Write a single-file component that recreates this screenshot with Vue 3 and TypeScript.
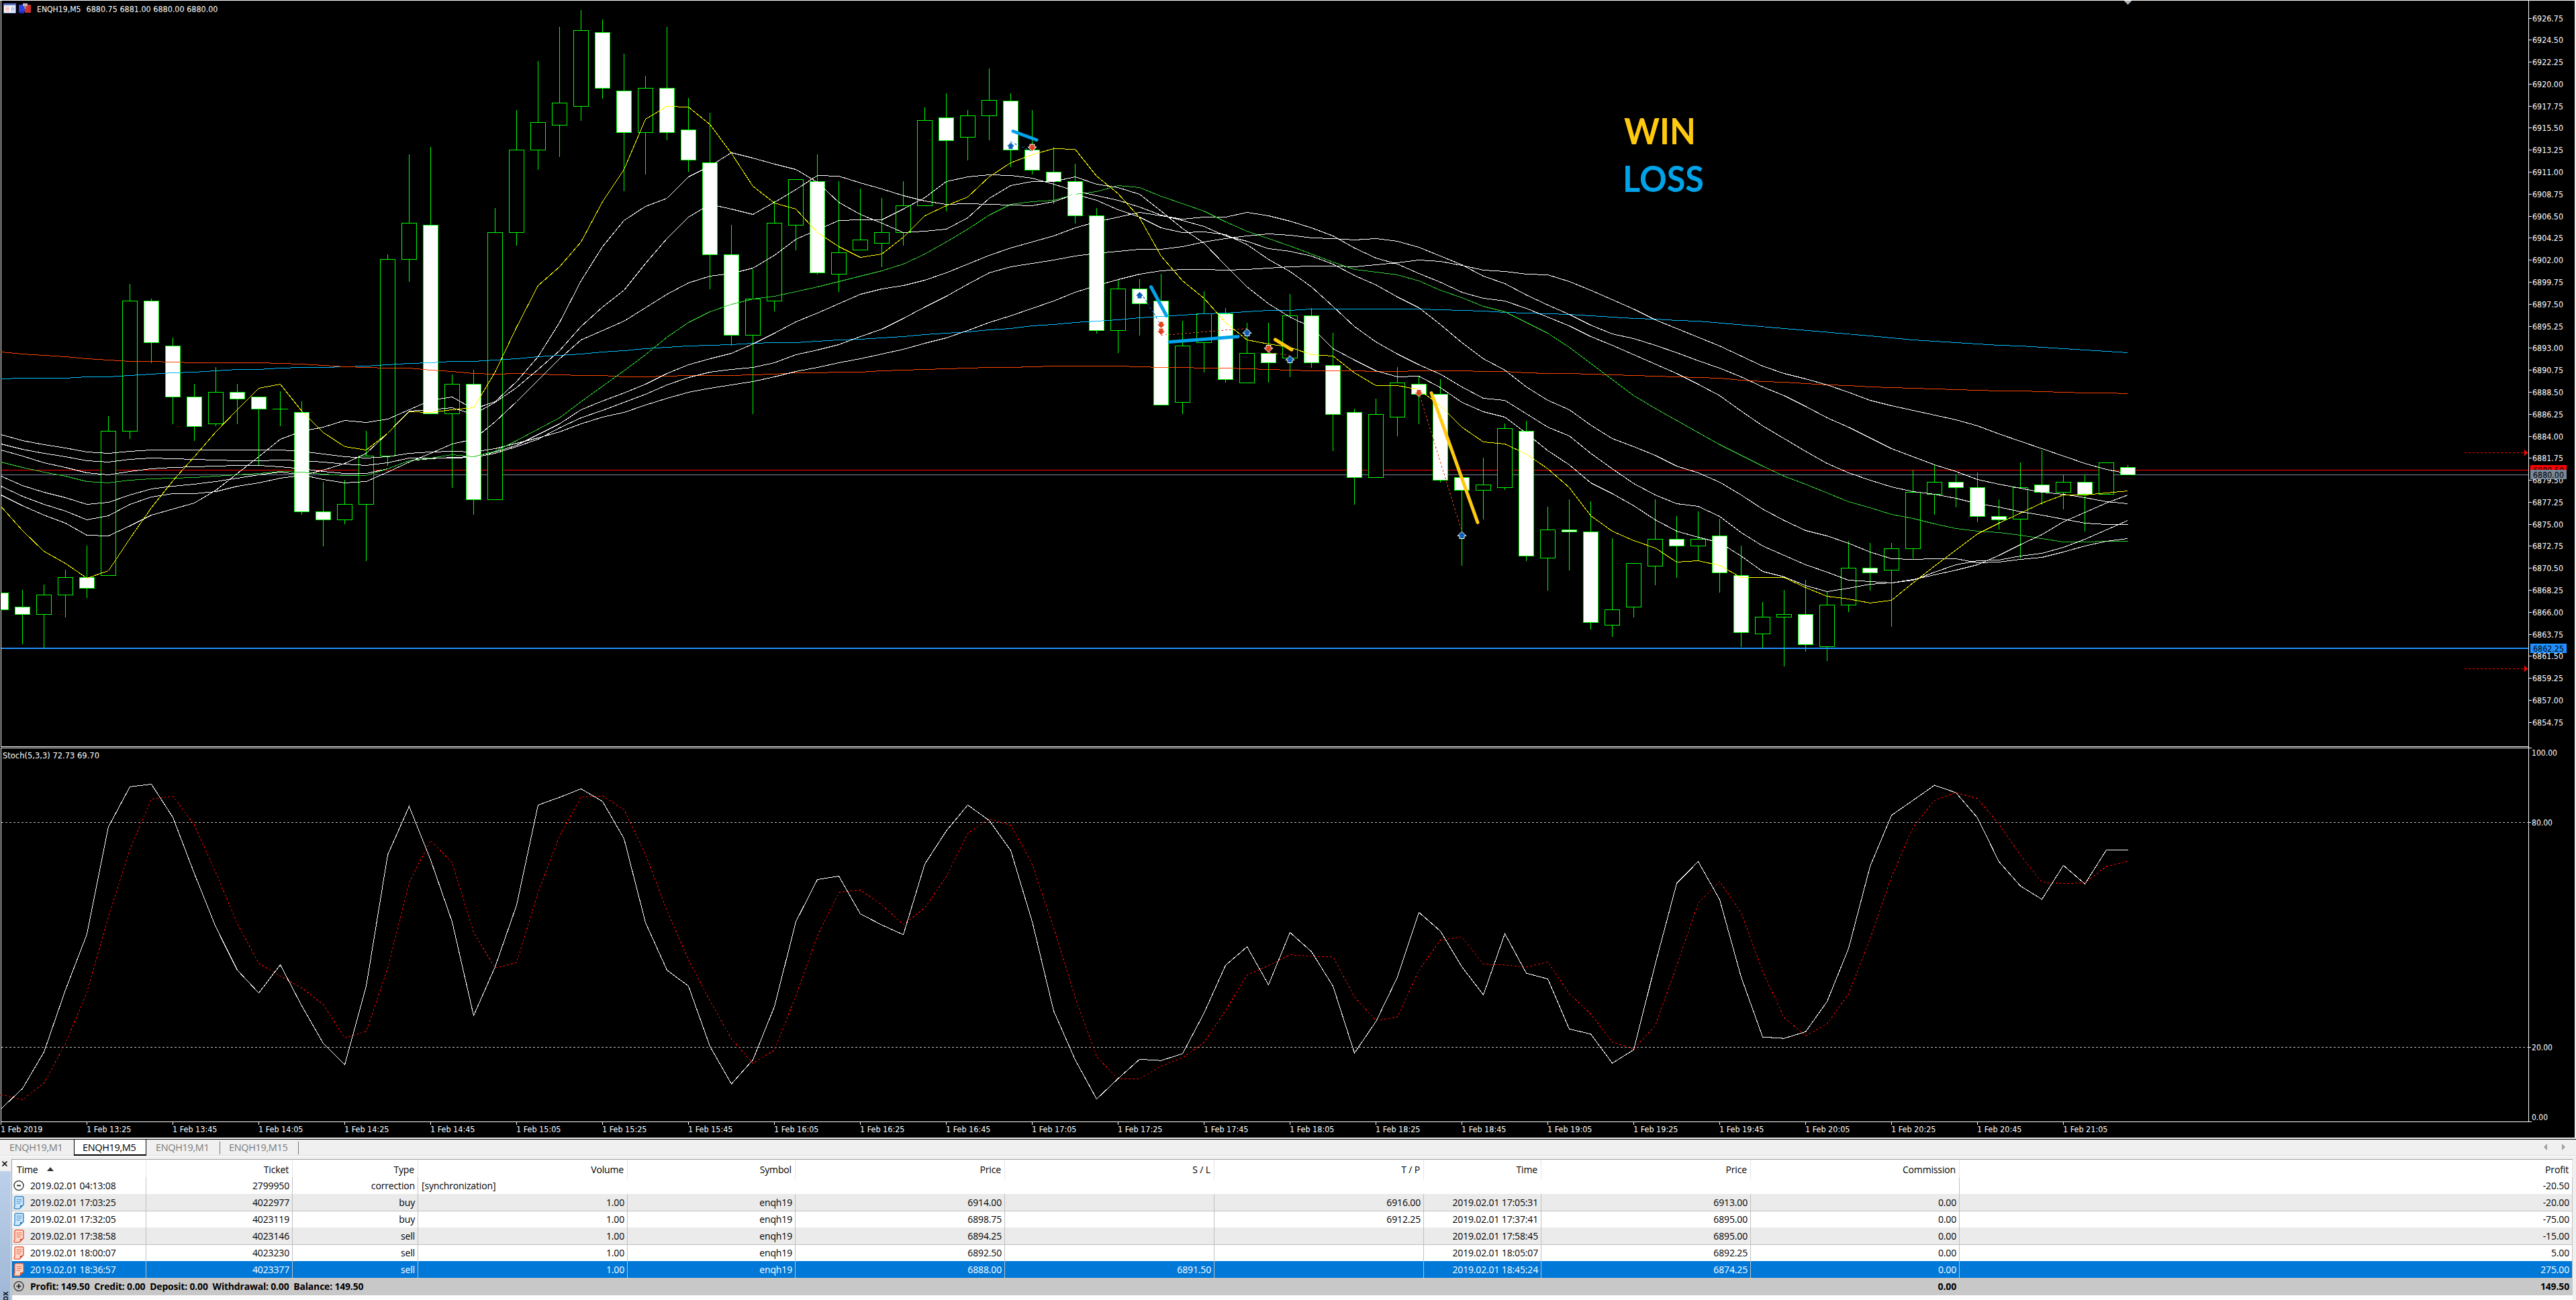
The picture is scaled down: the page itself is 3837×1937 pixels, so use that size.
<script setup lang="ts">
type Candle = [number, number, number, number, number]
type Sample = number | null

const STEP = 32
const barX = (i: number): number => 1 + STEP * i

// Samples are stored per strip of bars, each with its own top and resolution.
function priceY(i: number, v: number): number {
  if (i < 60) return v / 1.568
  if (i < 80) return 100 + v / 1.7422
  return 500 + v / 3
}
function stochY(i: number, v: number): number {
  return 1100 + v / (i < 80 ? 2.6133 : 2.529)
}

// [falling, high, body top, body bottom, low]
const candles: Candle[] = [
  [1, 1384, 1384, 1424, 1424], [1, 1378, 1418, 1435, 1505], [0, 1366, 1390, 1435, 1513], [0, 1331, 1349, 1390, 1443],
  [1, 1275, 1349, 1373, 1397], [0, 972, 1007, 1344, 1344], [0, 663, 703, 1007, 1025], [1, 698, 703, 800, 848],
  [1, 789, 807, 927, 991], [1, 897, 927, 995, 1030], [0, 858, 915, 990, 996], [1, 897, 915, 932, 991],
  [1, 927, 927, 955, 1088], [0, 914, 955, 955, 996], [1, 938, 962, 1195, 1203], [1, 1126, 1195, 1213, 1276],
  [0, 1121, 1178, 1213, 1225], [0, 1007, 1064, 1178, 1311], [0, 594, 606, 1064, 1088], [0, 361, 521, 606, 659],
  [1, 343, 526, 966, 966], [0, 875, 897, 966, 1140], [1, 864, 897, 1167, 1203], [0, 486, 543, 1167, 1167],
  [0, 257, 349, 543, 574], [0, 143, 286, 349, 397], [0, 63, 240, 292, 367], [0, 24, 70, 247, 282],
  [1, 45, 75, 206, 230], [1, 125, 212, 309, 447], [0, 177, 206, 309, 408], [1, 63, 206, 309, 328],
  [1, 229, 303, 373, 402], [1, 263, 379, 595, 676], [1, 525, 595, 783, 808], [0, 628, 698, 783, 967],
  [0, 469, 521, 703, 728], [0, 418, 418, 526, 585], [1, 361, 424, 636, 641], [0, 423, 590, 640, 682],
  [0, 441, 560, 584, 584], [0, 463, 543, 567, 624], [0, 423, 480, 543, 574], [0, 251, 281, 480, 480],
  [1, 218, 275, 327, 494], [0, 257, 269, 320, 374], [0, 160, 234, 269, 328], [1, 218, 235, 349, 390],
  [1, 257, 349, 396, 408], [1, 344, 401, 424, 477], [1, 383, 424, 504, 522], [1, 486, 504, 772, 779],
  [0, 652, 675, 772, 825], [1, 652, 675, 709, 784], [1, 640, 703, 945, 945], [0, 750, 807, 939, 967],
  [0, 681, 733, 800, 870], [1, 720, 733, 886, 894], [0, 754, 824, 893, 893], [1, 754, 824, 847, 894],
  [0, 589, 645, 754, 805], [1, 625, 645, 767, 781], [1, 690, 773, 900, 997], [1, 887, 895, 1065, 1136],
  [0, 861, 900, 1065, 1065], [0, 779, 818, 907, 958], [1, 803, 823, 849, 927], [1, 810, 849, 1072, 1078],
  [1, 1065, 1065, 1097, 1294], [0, 1014, 1084, 1097, 1174], [0, 925, 938, 1091, 1098], [1, 918, 945, 1269, 1282],
  [0, 1141, 1200, 1274, 1359], [1, 1122, 1200, 1205, 1307], [1, 1127, 1205, 1440, 1460], [0, 1223, 1408, 1447, 1479],
  [0, 1288, 1288, 1401, 1429], [0, 1122, 1224, 1294, 1345], [1, 1166, 1224, 1243, 1326], [0, 1153, 1224, 1243, 1282],
  [1, 820, 895, 1060, 1149], [1, 939, 1072, 1325, 1392], [0, 1191, 1258, 1333, 1396], [0, 1137, 1246, 1258, 1479],
  [1, 1092, 1246, 1379, 1413], [0, 1145, 1204, 1390, 1455], [0, 918, 1039, 1204, 1236], [1, 927, 1039, 1060, 1140],
  [0, 927, 952, 1048, 1302], [0, 600, 700, 952, 996], [0, 579, 655, 709, 801], [1, 622, 655, 679, 768],
  [1, 612, 679, 808, 834], [1, 732, 808, 821, 867], [0, 567, 679, 820, 996], [1, 513, 667, 700, 756],
  [0, 622, 655, 700, 777], [1, 622, 655, 709, 876], [0, 568, 568, 709, 709], [1, 579, 589, 622, 622],
]

const bars = candles.map(([falling, high, top, bottom, low], i) => {
  const y = (v: number): number => Math.round(priceY(i, v))
  return { x: barX(i), falling: falling === 1, high: y(high), top: y(top), bottom: y(bottom), low: y(low) }
})

const n = null
const averages: { cls: string; data: Sample[] }[] = [
  { cls: 'ma-sky', data: [
    884, 883, 882, 882, 880, 879, 876, 873, 870, 868, 865, 863, 862, 860, 858, 857, 856, 854, 851, 848,
    846, 844, 843, 840, 837, 833, 829, 826, 822, 819, 814, 811, 808, 806, 804, 802, 800, 799, 797, 794,
    792, 789, 786, 781, 777, 774, 770, 766, 761, 758, 753, 750, 747, 742, 739, 736, 733, 730, 727, 725,
    630, 627, 627, 627, 627, 628, 628, 629, 631, 633, 636, 638, 640, 642, 645, 648, 651, 654, 656, 659,
    n, n, n, n, n, n, n, -1, 8, 17, 23, 29, 35, 42, 46, 52, 58, 64, 70, 76] },
  { cls: 'ma-orange', data: [
    822, 826, 829, 833, 838, 841, 843, 844, 845, 846, 846, 846, 847, 848, 850, 853, 856, 857, 859, 860,
    864, 867, 872, 873, 872, 873, 875, 876, 877, 879, 880, 878, 876, 876, 876, 875, 874, 871, 871, 869,
    868, 866, 864, 862, 861, 859, 858, 857, 856, 855, 854, 855, 855, 856, 857, 858, 859, 860, 861, 863,
    786, 787, 787, 788, 790, 789, 788, 788, 788, 789, 790, 792, 794, 794, 796, 798, 800, 802, 804, 805,
    190, 197, 203, 208, 213, 219, 223, 229, 232, 235, 236, 239, 242, 245, 247, 248, 251, 254, 254, 257] },
  { cls: 'ma-white', data: [
    1015, 1028, 1038, 1046, 1056, 1059, 1054, 1051, 1051, 1051, 1050, 1050, 1050, 1050, 1054, 1060, 1066, 1070, 1066, 1058,
    1056, 1054, 1056, 1047, 1035, 1022, 1008, 990, 974, 962, 945, 930, 916, 907, 898, 891, 880, 867, 857, 847,
    837, 826, 815, 802, 789, 772, 753, 737, 720, 702, 682, 666, 652, 640, 632, 628, 629, 631, 628, 625,
    517, 515, 516, 518, 513, 507, 500, 503, 514, 526, 529, 537, 539, 555, 578, 602, 627, 655, 678, 700,
    45, 90, 134, 167, 193, 220, 252, 287, 311, 332, 353, 376, 403, 439, 472, 505, 538, 569, 597, 616] },
  { cls: 'ma-white', data: [
    1037, 1049, 1058, 1067, 1076, 1078, 1073, 1070, 1071, 1073, 1074, 1076, 1075, 1074, 1076, 1079, 1084, 1087, 1080, 1070,
    1070, 1069, 1068, 1058, 1043, 1025, 999, 975, 958, 939, 920, 898, 881, 869, 863, 857, 846, 828, 817, 805,
    786, 768, 743, 716, 692, 664, 637, 623, 615, 607, 597, 591, 586, 581, 581, 575, 565, 557, 550, 545,
    435, 443, 444, 448, 444, 452, 467, 490, 513, 541, 561, 591, 617, 641, 669, 691, 704, 721, 740, 762,
    145, 184, 227, 268, 316, 365, 409, 457, 505, 541, 575, 607, 641, 662, 682, 700, 709, 722, 741, 751] },
  { cls: 'ma-white', data: [
    1050, 1065, 1080, 1092, 1104, 1109, 1101, 1094, 1091, 1089, 1088, 1087, 1087, 1089, 1095, 1101, 1105, 1106, 1094, 1075,
    1071, 1068, 1067, 1056, 1040, 1015, 990, 957, 936, 918, 897, 872, 851, 838, 824, 803, 777, 751, 730, 708,
    686, 674, 667, 654, 637, 616, 596, 579, 565, 551, 531, 517, 506, 495, 504, 511, 506, 506, 496, 503,
    399, 416, 438, 469, 494, 511, 534, 558, 583, 599, 606, 625, 648, 671, 699, 721, 746, 770, 795, 823,
    268, 335, 403, 460, 515, 569, 613, 645, 675, 697, 708, 725, 750, 766, 785, 800, 819, 838, 844, 844] },
  { cls: 'ma-green', data: [
    1078, 1092, 1103, 1112, 1124, 1128, 1121, 1118, 1116, 1115, 1112, 1108, 1105, 1101, 1103, 1107, 1110, 1110, 1094, 1075,
    1069, 1062, 1066, 1053, 1028, 1002, 975, 938, 902, 865, 828, 787, 753, 728, 710, 698, 691, 680, 670, 657,
    645, 632, 616, 592, 565, 534, 501, 477, 471, 468, 453, 447, 432, 437, 458, 475, 492, 518, 539, 557,
    464, 484, 506, 524, 532, 539, 554, 579, 598, 620, 635, 662, 690, 727, 769, 810, 852, 885, 917, 948,
    485, 533, 581, 628, 662, 701, 740, 767, 797, 815, 841, 860, 874, 880, 892, 907, 922, 922, 919, 919] },
  { cls: 'ma-white', data: [
    1112, 1133, 1149, 1162, 1178, 1173, 1155, 1142, 1135, 1131, 1124, 1116, 1109, 1102, 1108, 1120, 1128, 1125, 1102, 1078,
    1058, 1037, 1026, 984, 938, 888, 838, 794, 771, 750, 718, 686, 660, 645, 638, 626, 596, 558, 536, 514,
    512, 513, 488, 461, 424, 412, 407, 410, 416, 430, 446, 456, 467, 483, 502, 515, 528, 550, 563, 580,
    477, 490, 511, 540, 565, 596, 624, 667, 714, 756, 785, 829, 864, 889, 928, 964, 984, 1007, 1034, 1052,
    655, 710, 773, 824, 871, 895, 928, 965, 997, 1000, 997, 997, 1015, 1010, 1000, 991, 965, 940, 919, 907] },
  { cls: 'ma-white', data: [
    1135, 1158, 1177, 1194, 1213, 1205, 1178, 1160, 1152, 1153, 1148, 1136, 1127, 1116, 1110, 1098, 1082, 1059, 1012, 960,
    957, 951, 968, 940, 905, 862, 818, 762, 716, 677, 615, 557, 507, 477, 488, 500, 472, 442, 409, 411,
    426, 441, 457, 469, 477, 475, 476, 478, 480, 470, 453, 467, 489, 507, 532, 542, 541, 548, 571, 606,
    529, 570, 621, 673, 712, 744, 771, 797, 830, 859, 864, 899, 933, 957, 1001, 1041, 1081, 1109, 1132, 1140,
    808, 880, 940, 980, 1022, 1055, 1093, 1099, 1105, 1092, 1055, 1022, 1006, 1003, 985, 973, 946, 910, 866, 826] },
  { cls: 'ma-white', data: [
    1155, 1180, 1202, 1222, 1250, 1252, 1228, 1202, 1188, 1175, 1145, 1105, 1067, 1026, 1007, 998, 982, 987, 978, 956,
    935, 927, 955, 938, 890, 833, 752, 655, 575, 514, 482, 463, 413, 388, 356, 369, 383, 395, 425, 472,
    500, 520, 543, 540, 535, 508, 462, 433, 424, 424, 413, 430, 438, 453, 492, 533, 568, 620, 670, 709,
    648, 674, 730, 760, 787, 804, 802, 831, 869, 893, 908, 949, 995, 1032, 1078, 1107, 1138, 1174, 1204, 1219,
    925, 983, 1054, 1076, 1117, 1144, 1127, 1111, 1105, 1090, 1067, 1046, 1024, 980, 934, 888, 830, 788, 748, 712] },
  { cls: 'ma-yellow', data: [
    1182, 1238, 1287, 1316, 1350, 1333, 1258, 1185, 1122, 1066, 1008, 957, 906, 897, 960, 1010, 1042, 1051, 1012, 961,
    962, 956, 952, 868, 764, 667, 622, 565, 470, 395, 277, 247, 250, 290, 358, 435, 474, 488, 542, 575,
    600, 593, 554, 503, 480, 460, 412, 380, 360, 346, 348, 411, 452, 508, 598, 655, 696, 753, 794, 803,
    726, 745, 750, 793, 825, 825, 837, 878, 933, 972, 978, 1003, 1042, 1090, 1164, 1204, 1228, 1247, 1284, 1280,
    1027, 1081, 1081, 1081, 1126, 1165, 1177, 1195, 1183, 1105, 1030, 957, 886, 838, 792, 747, 712, 712, 703, 694] },
]

const lines = averages.map(({ cls, data }) => ({
  cls,
  points: data
    .map((v, i) => (v === null ? '' : `${barX(i) + 0.5},${(Math.round(priceY(i, v)) + 0.5).toFixed(1)}`))
    .filter(Boolean)
    .join(' '),
}))

const stochRaw: number[] = [
  1443, 1364, 1222, 980, 763, 345, 189, 179, 308, 527, 735, 903, 992, 882, 1042, 1188, 1271, 965, 454, 265,
  474, 715, 1080, 890, 650, 260, 230, 197, 246, 391, 718, 903, 965, 1200, 1346, 1252, 1045, 714, 550, 537,
  684, 727, 765, 490, 361, 260, 320, 437, 714, 1062, 1252, 1405, 1325, 1250, 1255, 1228, 1070, 884, 812, 960,
  756, 831, 965, 1226, 1103, 930, 678, 751, 890, 999, 761, 915, 937, 1132, 1152, 1265, 1213, 880, 565, 480,
  608, 900, 1126, 1131, 1106, 992, 792, 483, 290, 234, 177, 205, 300, 465, 557, 607, 479, 549, 421, 421,
]
const main = stochRaw.map((v, i) => stochY(i, v))
// The signal line is the three-bar average of the main line.
const signal = main.map((_, i) =>
  i === 0 ? 1631 : i === 1 ? 1638.5 : (main[i] + main[i - 1] + main[i - 2]) / 3,
)
const toPoints = (ys: number[]): string => ys.map((y, i) => `${barX(i) + 0.5},${y.toFixed(1)}`).join(' ')

const priceTicks = Array.from({ length: 33 }, (_, k) => {
  const price = 6926.75 - 2.25 * k
  return { label: price.toFixed(2), y: Math.round(26.5 + k * 32.79) }
})
const stochTicks = [
  { label: '100.00', y: 1121, w: 38 },
  { label: '80.00', y: 1225, w: 31 },
  { label: '20.00', y: 1560, w: 31 },
  { label: '0.00', y: 1664, w: 24 },
]

const timeTicks = Array.from({ length: 25 }, (_, k) => {
  const t = 13 * 60 + 5 + 20 * k
  const hh = Math.floor(t / 60)
  const mm = String(t % 60).padStart(2, '0')
  return { x: 1 + 128 * k, label: k === 0 ? '1 Feb 2019' : `1 Feb ${hh}:${mm}`, w: k === 0 ? 62.5 : 66.5 }
})

const upArrows = [[1505.5, 217.5], [1697.5, 440], [1857.5, 495.5], [1921.5, 535.5], [2177.5, 797.5]]
const downArrows = [[1537.5, 220], [1729.5, 484], [1729.5, 494], [1889.5, 519.5], [2113.5, 585.5]]

interface Deal { time: string; ticket: string; type: string; price: string; sl: string; tp: string; time2: string; price2: string; profit: string }
const deals: Deal[] = [
  { time: '2019.02.01 17:03:25', ticket: '4022977', type: 'buy', price: '6914.00', sl: '', tp: '6916.00', time2: '2019.02.01 17:05:31', price2: '6913.00', profit: '-20.00' },
  { time: '2019.02.01 17:32:05', ticket: '4023119', type: 'buy', price: '6898.75', sl: '', tp: '6912.25', time2: '2019.02.01 17:37:41', price2: '6895.00', profit: '-75.00' },
  { time: '2019.02.01 17:38:58', ticket: '4023146', type: 'sell', price: '6894.25', sl: '', tp: '', time2: '2019.02.01 17:58:45', price2: '6895.00', profit: '-15.00' },
  { time: '2019.02.01 18:00:07', ticket: '4023230', type: 'sell', price: '6892.50', sl: '', tp: '', time2: '2019.02.01 18:05:07', price2: '6892.25', profit: '5.00' },
  { time: '2019.02.01 18:36:57', ticket: '4023377', type: 'sell', price: '6888.00', sl: '6891.50', tp: '', time2: '2019.02.01 18:45:24', price2: '6874.25', profit: '275.00' },
]
const headers = ['Ticket', 'Type', 'Volume', 'Symbol', 'Price', 'S / L', 'T / P', 'Time', 'Price', 'Commission', 'Profit']
const tabs = [
  { label: 'ENQH19,M1', cls: 'tab-first' },
  { label: 'ENQH19,M5', cls: 'tab-active' },
  { label: 'ENQH19,M1', cls: 'tab-third' },
  { label: 'ENQH19,M15', cls: 'tab-fourth' },
]
</script>

<template>
  <div class="terminal">
    <svg class="chart" width="3837" height="1698" viewBox="0 0 3837 1698">
      <rect width="3837" height="1698" fill="#000" />
      <g shape-rendering="crispEdges">
        <!-- window frames -->
        <rect x="0" y="0" width="3837" height="1" fill="#fff" />
        <rect x="1" y="0" width="1" height="1113" fill="#fff" />
        <rect x="1" y="1114" width="1" height="558" fill="#fff" />
        <rect x="1" y="1112" width="3766" height="1" fill="#fff" />
        <rect x="1" y="1114" width="3766" height="1" fill="#fff" />
        <rect x="1" y="1671" width="3766" height="1" fill="#fff" />
        <rect x="3766" y="0" width="1" height="1672" fill="#fff" />
        <path d="M3163 1h12l-6 6z" fill="#a9b1bb" />

        <!-- price levels -->
        <rect x="2" y="700" width="3764" height="1" fill="#f00" />
        <rect x="2" y="707" width="3764" height="1" fill="#778899" />

        <g v-for="b in bars" :key="b.x" fill="#0f0">
          <rect :x="b.x" :y="b.high" width="1" :height="Math.max(b.low - b.high, 1)" />
          <rect :x="b.x - 11" :y="b.top" width="23" :height="b.bottom - b.top + 1" />
          <rect
            v-if="b.bottom > b.top + 1"
            :x="b.x - 10"
            :y="b.top + 1"
            width="21"
            :height="b.bottom - b.top - 1"
            :fill="b.falling ? '#fff' : '#000'"
          />
        </g>
        <rect x="0" y="870" width="1" height="50" fill="#000" />
        <polyline v-for="(l, k) in lines" :key="k" :class="['ma', l.cls]" :points="l.points" />
        <rect x="2" y="965" width="3764" height="2" fill="#1e90ff" />

        <!-- pending stop markers -->
        <g stroke="#f00">
          <path d="M3671 674.5h88M3671 996.5h88" stroke-dasharray="3 3" />
        </g>
        <path d="M3760 669.5l5 5-5 5zM3760 991.5l5 5-5 5z" fill="#f00" />

        <!-- trade links -->
        <g fill="none" stroke-dasharray="3 3">
          <path d="M1505.5 211.5L1537.5 225.5M1700 437L1729.5 484.5" stroke="#0b5fb5" />
          <path d="M1729.5 499.5L1857.5 489.5M1889.5 525.5L1921.5 529.5M2113.5 585L2177.5 792" stroke="#e2431e" />
        </g>
      </g>

      <path v-for="(a, k) in upArrows" :key="'u' + k" class="arrow-up" :transform="`translate(${a[0]} ${a[1]})`" d="M0 -5.5L6.5 1H3.5V5H-3.5V1H-6.5z" />
      <path v-for="(a, k) in downArrows" :key="'d' + k" class="arrow-down" :transform="`translate(${a[0]} ${a[1]})`" d="M0 5.5L6.5 -1H3.5V-5H-3.5V-1H-6.5z" />

      <g fill="none" stroke-width="5" stroke-linecap="round">
        <path d="M1509 195.5L1544 208.5M1714.5 427.5L1737.5 470.5M1742 509.5L1844 501.5" stroke="#00a2e8" />
        <path d="M1899.5 506L1924 521M2132 585.5L2201 778.5" stroke="#ffc90e" />
      </g>

      <!-- oscillator -->
      <g shape-rendering="crispEdges" fill="none">
        <path d="M2 1225.5H3766M2 1560.5H3766" stroke="#c0c0c0" stroke-dasharray="3 3" />
        <polyline :points="toPoints(signal)" stroke="#f00" stroke-dasharray="3 3" />
        <polyline :points="toPoints(main)" stroke="#fff" />
        <path d="M3767 1114.5h4M3767 1225.5h3M3767 1560.5h3M3767 1671.5h4" stroke="#fff" />
        <path v-for="t in timeTicks" :key="t.x" :d="`M${t.x + 0.5} 1672v4`" stroke="#fff" />
        <path v-for="t in priceTicks" :key="t.y" :d="`M3767 ${t.y + 0.5}h4`" stroke="#fff" />
      </g>

      <g class="axis-text">
        <text v-for="t in priceTicks" :key="t.y" x="3772" :y="t.y + 5" textLength="46" lengthAdjust="spacingAndGlyphs">{{ t.label }}</text>
        <text v-for="t in stochTicks" :key="t.y" x="3771" :y="t.y + 5" :textLength="t.w" lengthAdjust="spacingAndGlyphs">{{ t.label }}</text>
        <text v-for="t in timeTicks" :key="t.x" :x="t.x" y="1687" :textLength="t.w" lengthAdjust="spacingAndGlyphs">{{ t.label }}</text>
        <text x="55" y="18" textLength="65.5" lengthAdjust="spacingAndGlyphs">ENQH19,M5</text>
        <text x="128.5" y="18" textLength="196" lengthAdjust="spacingAndGlyphs">6880.75 6881.00 6880.00 6880.00</text>
        <text x="4" y="1130" textLength="144" lengthAdjust="spacingAndGlyphs">Stoch(5,3,3) 72.73 69.70</text>
      </g>
      <g class="axis-text badge">
        <rect x="3769" y="693" width="54" height="14" fill="#f00" />
        <text x="3773" y="705" textLength="46" lengthAdjust="spacingAndGlyphs">6880.50</text>
        <rect x="3769" y="700" width="54" height="14" fill="#778899" />
        <text x="3773" y="712" textLength="46" lengthAdjust="spacingAndGlyphs">6880.00</text>
        <rect x="3769" y="959" width="54" height="14" fill="#1e90ff" />
        <text x="3773" y="971" textLength="46" lengthAdjust="spacingAndGlyphs">6862.25</text>
      </g>

      <!-- window buttons -->
      <g shape-rendering="crispEdges">
        <rect x="5" y="5" width="19" height="15" rx="1" fill="#5b6fc0" />
        <rect x="6" y="8" width="17" height="11" fill="#fff" />
        <path d="M8 10.5h6M8 12.5h6M8 14.5h6M8 16.5h6" stroke="#f0a090" />
        <path d="M16 10.5h6M16 12.5h6M16 14.5h6M16 16.5h6" stroke="#8fa4e8" />
        <rect x="28" y="7" width="9" height="10" fill="#2f3fe0" />
        <rect x="37" y="7" width="9" height="12" fill="#d03028" />
        <path d="M27 17h9v3h-7z" fill="#1c2ab8" />
        <rect x="34" y="5" width="7" height="4" fill="#b9b9b9" />
        <rect x="36" y="9" width="3" height="4" fill="#888" />
      </g>

      <g class="verdict">
        <text x="2419" y="215" textLength="107" lengthAdjust="spacingAndGlyphs" fill="#ffc90e">WIN</text>
        <text x="2417" y="286" textLength="121" lengthAdjust="spacingAndGlyphs" fill="#00a2e8">LOSS</text>
      </g>

      <rect x="3835" y="0" width="2" height="1698" fill="#f0f0f0" />
      <rect x="0" y="1695" width="3837" height="2" fill="#f4f4f4" />
      <rect x="0" y="1697" width="3837" height="1" fill="#000" />
    </svg>

    <div class="tabbar">
      <div v-for="(t, k) in tabs" :key="k" :class="['tab', t.cls]">{{ t.label }}</div>
      <svg class="scrollers" width="40" height="12" viewBox="0 0 40 12">
        <path d="M7 1v10L2 6zM29 1v10l5-5z" fill="#a0a0a0" />
      </svg>
    </div>

    <div class="toolbox">
      <div class="side">
        <svg class="close" width="17" height="17" viewBox="0 0 17 17">
          <path d="M3.5 2.5l7 7M10.5 2.5l-7 7" stroke="#000" stroke-width="1.6" />
        </svg>
        <div class="caption"><span>Toolbox</span></div>
      </div>

      <div class="table">
        <div class="row head">
          <div class="cell time">Time<svg class="sort" width="10" height="6" viewBox="0 0 10 6"><path d="M5 0l5 6H0z" fill="#333" /></svg></div>
          <div v-for="(h, k) in headers" :key="k" class="cell">{{ h }}</div>
        </div>

        <div class="row correction">
          <div class="cell time">
            <svg class="icon" width="16" height="20" viewBox="0 0 16 20"><circle cx="8" cy="9.5" r="7" fill="none" stroke="#444" stroke-width="1.5" /><path d="M5 9.5h6" stroke="#333" stroke-width="2" /></svg>
            <span>2019.02.01 04:13:08</span>
          </div>
          <div class="cell">2799950</div>
          <div class="cell">correction</div>
          <div class="cell note">[synchronization]</div>
          <div class="cell">-20.50</div>
        </div>

        <div v-for="(d, k) in deals" :key="d.ticket" :class="['row', { shaded: k % 2 === 0, selected: k === 4 }]">
          <div class="cell time">
            <svg :class="['icon', d.type]" width="16" height="20" viewBox="0 0 16 20">
              <path class="sheet" d="M3.5 .8h9.5q2 0 2 2V13l-6 6H2.2q-1.4 0-1-1.6l.8-3.2V2.6Q2 .8 3.5 .8z" />
              <path class="rule" d="M4.5 5h8M4.5 8h8M4.5 11h6" />
              <path class="fold" d="M15 12.5L8.8 19.3q1.6-1.6 1.2-5.3 3 .4 5-1.5z" />
            </svg>
            <span>{{ d.time }}</span>
          </div>
          <div class="cell">{{ d.ticket }}</div>
          <div class="cell">{{ d.type }}</div>
          <div class="cell">1.00</div>
          <div class="cell">enqh19</div>
          <div class="cell">{{ d.price }}</div>
          <div class="cell">{{ d.sl }}</div>
          <div class="cell">{{ d.tp }}</div>
          <div class="cell">{{ d.time2 }}</div>
          <div class="cell">{{ d.price2 }}</div>
          <div class="cell">0.00</div>
          <div class="cell">{{ d.profit }}</div>
        </div>

        <div class="total">
          <div class="cell time">
            <svg class="icon" width="16" height="20" viewBox="0 0 16 20"><circle cx="8" cy="9.5" r="7" fill="none" stroke="#444" stroke-width="1.5" /><path d="M4.5 9.5h7M8 6v7" stroke="#333" stroke-width="2" /></svg>
            <span class="summary">Profit: 149.50&nbsp; Credit: 0.00&nbsp; Deposit: 0.00&nbsp; Withdrawal: 0.00&nbsp; Balance: 149.50</span>
          </div>
          <div class="cell">0.00</div>
          <div class="cell">149.50</div>
        </div>
        <div class="blank"></div>
      </div>
      <div class="edge"></div>
    </div>
  </div>
</template>

<style>
body { overflow: hidden; background: #f0f0f0; }
</style>

<style scoped>
.terminal {
  width: 3837px;
  height: 1937px;
  overflow: hidden;
  display: flex;
  flex-direction: column;
  background: #f0f0f0;
  font-family: "Open Sans", "Noto Sans", sans-serif;
  font-size: 14px;
  color: #000;
}
.chart { display: block; flex: none; }
.ma { fill: none; stroke-width: 1; }
.ma-white { stroke: #fff; }
.ma-yellow { stroke: #ff0; }
.ma-green { stroke: #32cd32; }
.ma-sky { stroke: #00bfff; }
.ma-orange { stroke: #ff4500; }
.arrow-up { fill: #0b5fb5; stroke: #fff; stroke-width: 1; }
.arrow-down { fill: #e2431e; stroke: #fff; stroke-width: 1; }
.axis-text { font-family: "DejaVu Sans Condensed", "DejaVu Sans", sans-serif; font-stretch: condensed; font-size: 12.4px; fill: #fff; }
.badge { fill: #000; }
.verdict { font-family: Lato, sans-serif; font-weight: 700; font-size: 53px; }

.tabbar {
  flex: none;
  height: 29px;
  display: flex;
  align-items: flex-start;
  background: linear-gradient(#f0f0f0 0 23px, #dcdcdc 23px 24px, #fff 24px 25px, #f0f0f0 25px);
  color: #7a7a7a;
  font-size: 14.5px;
  line-height: 24px;
  letter-spacing: -0.35px;
}
.tab { box-sizing: border-box; height: 24px; white-space: nowrap; }
.tab-first { width: 110px; padding-left: 14px; }
.tab-active {
  width: 108px;
  height: 25px;
  margin-top: -1px;
  padding-left: 12px;
  background: #fff;
  border: 1px solid #000;
  border-bottom-width: 2px;
  border-top-color: #000;
  color: #000;
}
.tab-third, .tab-fourth {
  background: linear-gradient(#777, #777) right 3px / 1px 19px no-repeat;
}
.tab-third { width: 110px; padding-left: 14px; }
.tab-fourth { width: 117px; padding-left: 13px; }
.scrollers { margin: 5px 10px 0 auto; }

.toolbox { flex: 1; display: flex; min-height: 0; }
.side { width: 17px; display: flex; flex-direction: column; }
.close { flex: none; margin-top: 1px; }
.caption {
  flex: 1;
  width: 16px;
  min-height: 0;
  overflow: hidden;
  background: linear-gradient(#bcd0ea, #9fb8d6);
  padding-top: 179px;
  box-sizing: border-box;
}
.caption span { writing-mode: vertical-rl; transform: rotate(180deg); font-size: 12.5px; line-height: 16px; font-weight: 600; display: block; }
.table {
  width: 3815px;
  box-sizing: border-box;
  display: flex;
  flex-direction: column;
  border-top: 1px solid #a0a0a0;
  border-left: 1px solid #a0a0a0;
  background: #fff;
  letter-spacing: -0.15px;
}
.row {
  flex: none;
  height: 25px;
  display: grid;
  grid-template-columns: 200px 218px 187px 312px 250px 312px 312px 312px 175px 312px 311px 913px;
}
.cell {
  box-sizing: border-box;
  border-right: 1px solid #c0c0c0;
  border-bottom: 1px solid #c0c0c0;
  padding-right: 4px;
  text-align: right;
  line-height: 25px;
  white-space: nowrap;
}
.row.head { height: 26px; }
.head .cell { border-right-color: #e5e5e5; border-bottom: 0; padding-right: 5px; line-height: 29px; }
.cell.time { display: flex; align-items: center; padding-left: 2px; gap: 9px; text-align: left; }
.head .cell.time { padding-left: 7px; gap: 14px; }
.sort { margin-bottom: -1px; margin-top: -2px; }
.icon { flex: none; }
.row.correction { grid-template-columns: 200px 218px 187px 2296px 913px; }
.cell.note { text-align: left; padding-left: 5px; }
.shaded { background: #ebebeb; }
.selected { background: #0078d7; color: #fff; }
.selected .cell { border-bottom-color: #0078d7; }
.sheet { fill: #cfe6fb; stroke: #3c8fcb; stroke-width: 1.5; }
.rule { stroke: #6aaee0; stroke-width: 1.3; fill: none; }
.fold { fill: #1f78b8; }
.sell .sheet { fill: #ffd9cb; stroke: #e8664a; }
.sell .rule { stroke: #f08a6c; }
.sell .fold { fill: #d9401c; }
.total {
  flex: none;
  height: 26px;
  display: grid;
  grid-template-columns: 2590px 311px 913px;
  background: #c8c8c8;
  font-weight: 700;
}
.total .cell { border: 0; padding-right: 5px; line-height: 26px; }
.summary { letter-spacing: -0.2px; }
.blank { flex: 1; background: #fff; }
.edge { flex: 1; }
</style>
